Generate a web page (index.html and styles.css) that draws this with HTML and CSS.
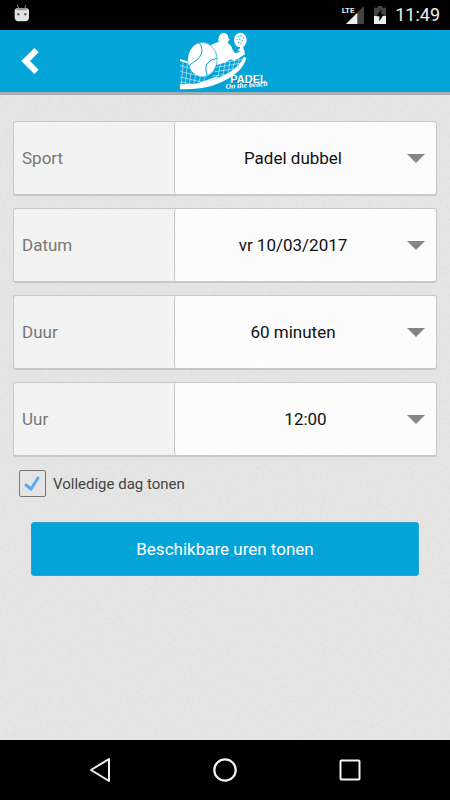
FILE: index.html
```html
<!DOCTYPE html>
<html lang="nl">
<head>
  <meta charset="utf-8">
  <meta name="viewport" content="width=device-width, initial-scale=1">
  <title>Padel on the beach</title>
  <link rel="stylesheet" href="styles.css">
</head>
<body>
  <div class="statusbar">
    <svg class="robot" width="16" height="18" viewBox="0 0 48 54">
      <path d="M10 3l4 10M36 3l-4 10" stroke="#888" stroke-width="3"/>
      <path d="M2 20Q3 12 12 12H35Q44 12 45 20V40Q44 52 35 52H12Q3 52 2 40Z" fill="#e2e2e2"/>
      <path d="M6 15Q9 12 13 12H34Q39 12 41 15L37 19H10Z" fill="#999"/>
      <path d="M10 28h6v6h-6zM31 28h6v6h-6z" fill="#444"/>
    </svg>
    <div class="status-right">
      <svg width="24" height="20" viewBox="0 0 72 60">
        <path d="M69 3V57H15Z" fill="#444"/>
        <path d="M49 23V57H15Z" fill="#eee"/>
        <path d="M0 0H38V30H0Z" fill="#000"/>
        <text class="lte" x="2" y="25">LTE</text>
      </svg>
      <svg width="12" height="18" viewBox="0 0 36 54">
        <path d="M11 0H25V5H36V54H0V5H11Z" fill="#444"/>
        <path d="M0 30H36V54H0Z" fill="#eee"/>
        <path d="M22 10L7 31H16V46L30 25H21Z" fill="#000"/>
      </svg>
      <span class="clock">11:49</span>
    </div>
  </div>

  <header class="header">
    <button class="back" type="button" aria-label="Terug">
      <svg width="18" height="26" viewBox="0 0 54 78">
        <path d="M40 0L53 13L27 39L53 65L40 78L1 39Z" fill="#fff"/>
      </svg>
    </button>
    <svg class="logo" width="90" height="58" viewBox="30 12 270 174">
      <!-- net -->
      <g fill="none" stroke="#fff" stroke-opacity="0.75" stroke-width="2">
        <path d="M30 97L62 105M30 113L68 122M30 130L95 146M30 147L100 163M30 161L75 171"/>
        <path d="M40 96L34 172M53 98L46 172M66 112L58 172M78 134L71 172M92 144L85 170M106 146L99 168"/>
        <path d="M140 107L226 92M138 118L222 104M134 131L212 120M128 144L192 137"/>
        <path d="M152 104L143 152M166 102L158 146M180 100L173 142M194 98L186 134M208 95L200 122"/>
      </g>
      <path d="M30 93L66 104V110L30 99Z" fill="#fff"/>
      <path d="M30 169Q88 170 127 156Q180 139 205 112Q215 100 222 86L229 90Q222 113 206 129Q180 154 133 171Q92 185 30 184Z" fill="#fff"/>
      <!-- player -->
      <path d="M118 58Q124 48 136 45L147 41Q143 35 147 26Q152 14 163 15Q174 17 175 29L179 35Q174 39 173 45Q184 51 188 65L195 76L210 71L203 66L211 60L223 66L225 79L207 91L190 98L182 94Q170 104 138 112Z" fill="#fff"/>
      <!-- racket -->
      <path d="M209 52L212 71L221 71L220 51Z" fill="#fff"/>
      <ellipse cx="211" cy="36" rx="19" ry="22" fill="#fff"/>
      <g fill="#03a5d9">
        <circle cx="205" cy="26" r="2"/><circle cx="213" cy="24" r="2"/><circle cx="220" cy="30" r="2"/>
        <circle cx="201" cy="34" r="2"/><circle cx="209" cy="34" r="2"/><circle cx="217" cy="38" r="2"/>
        <circle cx="205" cy="43" r="2"/><circle cx="213" cy="46" r="2"/>
      </g>
      <!-- ball -->
      <ellipse cx="97" cy="95" rx="44" ry="52" fill="#fff" stroke="#03a5d9" stroke-width="2"/>
      <path d="M88 45Q100 60 94 79Q88 94 70 103Q57 109 56 119M141 91Q120 94 111 107Q104 121 112 143" fill="none" stroke="#03a5d9" stroke-width="3"/>
      <path d="M90 166Q121 156 142 147" fill="none" stroke="#fff" stroke-width="5"/>
      <text class="logo-name shade" x="183" y="167">PADEL</text>
      <text class="logo-name" x="181" y="165">PADEL</text>
      <text class="logo-sub" x="167" y="183" transform="rotate(-4 167 183)">On the beach</text>
    </svg>
  </header>

  <main class="content">
    <form class="booking">
      <div class="field">
        <label for="sport">Sport</label>
        <div class="picker">
          <select id="sport"><option>Padel dubbel</option></select>
        </div>
      </div>
      <div class="field">
        <label for="datum">Datum</label>
        <div class="picker">
          <select id="datum"><option>vr 10/03/2017</option></select>
        </div>
      </div>
      <div class="field">
        <label for="duur">Duur</label>
        <div class="picker">
          <select id="duur"><option>60 minuten</option></select>
        </div>
      </div>
      <div class="field">
        <label for="uur">Uur</label>
        <div class="picker">
          <select id="uur" class="time"><option>12:00</option></select>
        </div>
      </div>

      <div class="whole-day">
        <input type="checkbox" id="dag" checked>
        <label for="dag">Volledige dag tonen</label>
      </div>

      <button class="submit" type="button">Beschikbare uren tonen</button>
    </form>
  </main>

  <nav class="navbar">
    <button type="button" aria-label="Vorige">
      <svg width="24" height="26" viewBox="0 0 24 26"><path d="M21 2V24L3 13Z" fill="none" stroke="#f2f2f2" stroke-width="2" stroke-linejoin="round"/></svg>
    </button>
    <button type="button" aria-label="Start">
      <svg width="24" height="24" viewBox="0 0 24 24"><circle cx="12" cy="12" r="10.7" fill="none" stroke="#f2f2f2" stroke-width="2.2"/></svg>
    </button>
    <button type="button" aria-label="Overzicht">
      <svg width="24" height="24" viewBox="0 0 24 24"><rect x="2.5" y="2.5" width="19" height="19" rx="1" fill="none" stroke="#f2f2f2" stroke-width="2"/></svg>
    </button>
  </nav>
</body>
</html>
```

FILE: styles.css
```css
* {
  box-sizing: border-box;
}
body {
  margin: 0;
  min-height: 100vh;
  display: flex;
  flex-direction: column;
  font-family: Roboto, sans-serif;
  font-size: 17px;
  background-color: #e5e5e5;
  /* light paper grain */
  background-image: url("data:image/svg+xml,%3Csvg xmlns='http://www.w3.org/2000/svg' width='150' height='150'%3E%3Cfilter id='n'%3E%3CfeTurbulence type='fractalNoise' baseFrequency='0.35' numOctaves='2' stitchTiles='stitch'/%3E%3CfeColorMatrix values='0 0 0 0 0.5 0 0 0 0 0.5 0 0 0 0 0.5 0.25 0 0 0 -0.1'/%3E%3C/filter%3E%3Crect width='150' height='150' filter='url(%23n)'/%3E%3C/svg%3E");
}
button {
  border: none;
  background: none;
  padding: 0;
  font-family: inherit;
  cursor: pointer;
}
svg {
  display: block;
}

.statusbar {
  height: 30px;
  padding: 0 10px 0 14px;
  display: flex;
  align-items: center;
  justify-content: space-between;
  background: #000;
}
.robot {
  margin-bottom: 4px;
}
.status-right {
  display: flex;
  align-items: center;
  gap: 9px;
}
.lte {
  font: bold 24px Roboto, sans-serif;
  fill: #eee;
}
.clock {
  color: #eee;
  font-size: 18px;
  line-height: 30px;
}

.header {
  height: 65px;
  padding: 0 21px;
  display: grid;
  grid-template-columns: 1fr auto 1fr;
  align-items: center;
  background: #03a5d9;
  border-bottom: 3px solid rgba(150, 160, 165, 0.8);
  background-clip: padding-box;
}
.back {
  justify-self: start;
}
.logo-name {
  font: bold 33px "Liberation Sans", sans-serif;
  fill: #fff;
}
.logo-name.shade {
  fill: #0b6f93;
}
.logo-sub {
  font: italic bold 23px "Liberation Serif", serif;
  fill: #fff;
}

.content {
  flex: 1;
  padding: 26px 13px;
}
.booking {
  display: flex;
  flex-direction: column;
}
.field {
  height: 75px;
  margin-bottom: 12px;
  display: flex;
  background: rgba(255, 255, 255, 0.55);
  border: 1px solid #c8c8c8;
  border-bottom-width: 2px;
  border-radius: 3px;
}
.field label {
  width: 160px;
  padding-left: 8px;
  display: flex;
  align-items: center;
  color: #777;
}
.picker {
  flex: 1;
  display: grid;
  align-items: center;
  border-left: 1px solid #c8c8c8;
  border-radius: 3px;
  background: rgba(255, 255, 255, 0.7);
}
.picker select {
  grid-area: 1 / 1;
  height: 100%;
  padding: 0 25px 0 0;
  border: none;
  background: none;
  appearance: none;
  font-family: inherit;
  font-size: 17px;
  color: #111;
  text-align: center;
  text-align-last: center;
}
.picker select.time {
  padding-right: 0;
}
.picker::after {
  content: "";
  grid-area: 1 / 1;
  justify-self: end;
  margin-right: 11px;
  border: 9px solid transparent;
  border-top-color: #858585;
  border-bottom: none;
  pointer-events: none;
}

.whole-day {
  margin: 1px 6px 25px;
  display: flex;
  align-items: center;
  gap: 7px;
  font-size: 15px;
  color: #444;
}
.whole-day input {
  width: 27px;
  height: 27px;
  margin: 0;
  appearance: none;
  border: 1px solid #777;
  border-radius: 2px;
}
.whole-day input:checked {
  background: url("data:image/svg+xml,%3Csvg xmlns='http://www.w3.org/2000/svg' viewBox='0 0 25 25'%3E%3Cpath d='M6 14L11 18L18 7' fill='none' stroke='%2358abf8' stroke-width='3' stroke-linecap='round'/%3E%3C/svg%3E") center no-repeat;
}

.submit {
  height: 54px;
  margin: 0 18px;
  border: 1px solid #25a3cc;
  border-radius: 3px;
  background: #03a5d9;
  color: #fff;
  font-size: 17px;
}

.navbar {
  height: 60px;
  padding: 0 88px;
  display: flex;
  align-items: center;
  justify-content: space-between;
  background: #000;
}
```
